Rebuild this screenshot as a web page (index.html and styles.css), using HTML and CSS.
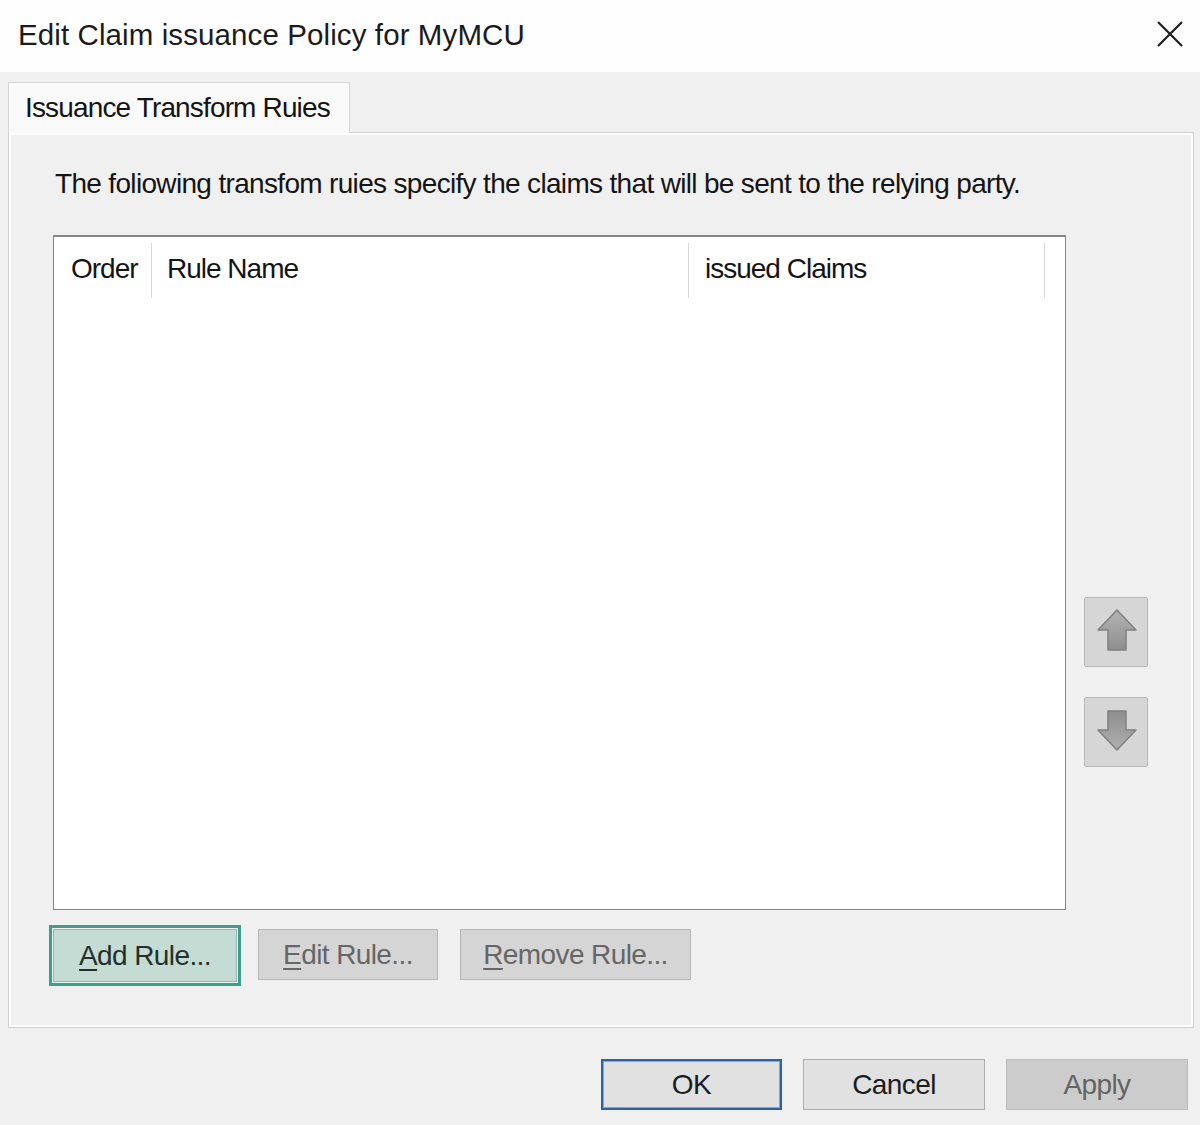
FILE: index.html
```html
<!DOCTYPE html>
<html>

<head>
  <meta charset="utf-8">
  <meta name="viewport" content="width=device-width">
  <title>Edit Claim issuance Policy for MyMCU</title>

  <link rel="stylesheet" href="styles.css">
</head>

<body>
  <div class="dialog">
    <header class="titlebar">
      <h1 class="title">Edit Claim issuance Policy for MyMCU</h1>
      <button class="close" aria-label="Close">
        <svg width="26" height="26" viewBox="0 0 26 26">
          <path d="M1 1 L25 25 M25 1 L1 25" stroke="#1e1e1e" stroke-width="2.2" fill="none" />
        </svg>
      </button>
    </header>

    <div class="tabstrip">
      <div class="tab">Issuance Transform Ruies</div>
    </div>

    <section class="panel">
      <p class="intro">The foliowing transfom ruies specify the claims that will be sent to the relying party.</p>

      <div class="list-row">
        <div class="listbox">
          <div class="list-head">
            <div class="col col-order">Order</div>
            <div class="col col-name">Rule Name</div>
            <div class="col col-claims">issued Claims</div>
          </div>
        </div>

        <div class="move-btns">
          <button class="move" aria-label="Move up">
            <svg width="62" height="68" viewBox="0 0 62 68">
              <defs>
                <linearGradient id="arrowUp" x1="0" y1="0" x2="0" y2="1">
                  <stop offset="0" stop-color="#b4b4b4" />
                  <stop offset="1" stop-color="#8e8e8e" />
                </linearGradient>
              </defs>
              <path d="M32 12 L51 32 L41 32 L41 52 L23 52 L23 32 L13 32 Z" fill="url(#arrowUp)" stroke="#808080" stroke-width="1.5" stroke-linejoin="round" />
            </svg>
          </button>
          <button class="move" aria-label="Move down">
            <svg width="62" height="68" viewBox="0 0 62 68">
              <defs>
                <linearGradient id="arrowDown" x1="0" y1="0" x2="0" y2="1">
                  <stop offset="0" stop-color="#8e8e8e" />
                  <stop offset="1" stop-color="#b0b0b0" />
                </linearGradient>
              </defs>
              <path d="M23 13 L41 13 L41 32 L51 32 L32 52 L13 32 L23 32 Z" fill="url(#arrowDown)" stroke="#808080" stroke-width="1.5" stroke-linejoin="round" />
            </svg>
          </button>
        </div>
      </div>

      <div class="rule-actions">
        <button class="btn btn-add"><u>A</u>dd Rule...</button>
        <button class="btn btn-off btn-edit"><u>E</u>dit Rule...</button>
        <button class="btn btn-off btn-remove"><u>R</u>emove Rule...</button>
      </div>
    </section>

    <footer class="dialog-actions">
      <button class="btn btn-ok">OK</button>
      <button class="btn btn-cancel">Cancel</button>
      <button class="btn btn-apply">Apply</button>
    </footer>
  </div>
</body>

</html>
```

FILE: styles.css
```css
html,
body {
  margin: 0;
  padding: 0;
  width: 100%;
  height: 100%;
  overflow: hidden;
}

body {
  background: #f0f0f0;
  font-family: "Liberation Sans", Arial, sans-serif;
  color: #141414;
}

.titlebar {
  height: 72px;
  background: #fefefe;
  display: flex;
  align-items: center;
  justify-content: space-between;
  padding: 0 17px 0 18px;
}

.title {
  margin: 0;
  font-size: 29.5px;
  font-weight: normal;
  letter-spacing: 0.1px;
  color: #1b1b1b;
  line-height: 40px;
  padding-bottom: 2px;
}

.close {
  border: 0;
  background: none;
  padding: 0;
  width: 26px;
  height: 26px;
  margin-bottom: 4px;
}

.close svg {
  display: block;
}

.tabstrip {
  padding: 10px 0 0 8px;
  height: 60px;
  box-sizing: border-box;
  display: flex;
  position: relative;
  z-index: 1;
}

.tab {
  width: 342px;
  height: 51px;
  box-sizing: border-box;
  background: #fafafa;
  border: 1px solid #d6d6d6;
  border-bottom: 0;
  padding: 5px 0 0 16px;
  font-size: 28px;
  letter-spacing: -0.85px;
  line-height: 40px;
}

.panel {
  margin: 0 6px 0 8px;
  height: 896px;
  box-sizing: border-box;
  border: 1px solid #d0d0d0;
  box-shadow: inset 0 0 0 2px #ffffff;
  background: #f0f0f0;
  padding: 34px 0 0 44px;
}

.intro {
  margin: 0 0 0 2px;
  font-size: 28px;
  line-height: 34px;
  letter-spacing: -0.67px;
}

.list-row {
  display: flex;
  align-items: flex-start;
  margin-top: 34px;
}

.listbox {
  width: 1013px;
  height: 675px;
  box-sizing: border-box;
  background: #ffffff;
  border: 1px solid #858585;
  border-top-width: 2px;
  padding-top: 6px;
}

.list-head {
  display: flex;
  height: 55px;
}

.col {
  font-size: 28px;
  letter-spacing: -1px;
  line-height: 52px;
  box-sizing: border-box;
  border-right: 1px solid #d6d6d6;
}

.col-order {
  width: 98px;
  padding-left: 17px;
}

.col-name {
  width: 537px;
  padding-left: 15px;
}

.col-claims {
  width: 356px;
  padding-left: 16px;
}

.move-btns {
  display: flex;
  flex-direction: column;
  gap: 30px;
  margin: 362px 0 0 18px;
}

.move {
  width: 64px;
  height: 70px;
  padding: 0;
  background: #d6d6d6;
  border: 1px solid #b8b8b8;
  border-radius: 2px;
}

.move svg {
  display: block;
}

.btn {
  font-family: "Liberation Sans", Arial, sans-serif;
  font-size: 28px;
  letter-spacing: -0.6px;
  height: 51px;
  padding: 0;
  box-sizing: border-box;
  border: 1px solid #adadad;
  background: #e1e1e1;
  color: #1c1c1c;
}

.btn u {
  text-underline-offset: 4px;
}

.rule-actions {
  display: flex;
  align-items: flex-start;
  margin-top: 19px;
}

.btn-add {
  width: 184px;
  height: 53px;
  background: #c4dcd4;
  border-color: #98b7ad;
  color: #25302c;
  outline: 3px solid #3d9f8b;
  outline-offset: 1px;
}

.btn-off {
  background: #d5d5d5;
  border-color: #b6b6b6;
  color: #666666;
}

.btn-edit {
  width: 180px;
  margin-left: 21px;
}

.btn-remove {
  width: 231px;
  margin-left: 22px;
}

.dialog-actions {
  display: flex;
  justify-content: flex-end;
  gap: 21px;
  padding: 31px 12px 0 0;
}

.btn-ok {
  width: 181px;
  border: 2px solid #2a63a6;
  box-shadow: inset 0 0 0 1px #7fa8d6;
}

.btn-cancel {
  width: 182px;
}

.btn-apply {
  width: 182px;
  background: #cccccc;
  border-color: #bdbdbd;
  color: #636363;
}
```
